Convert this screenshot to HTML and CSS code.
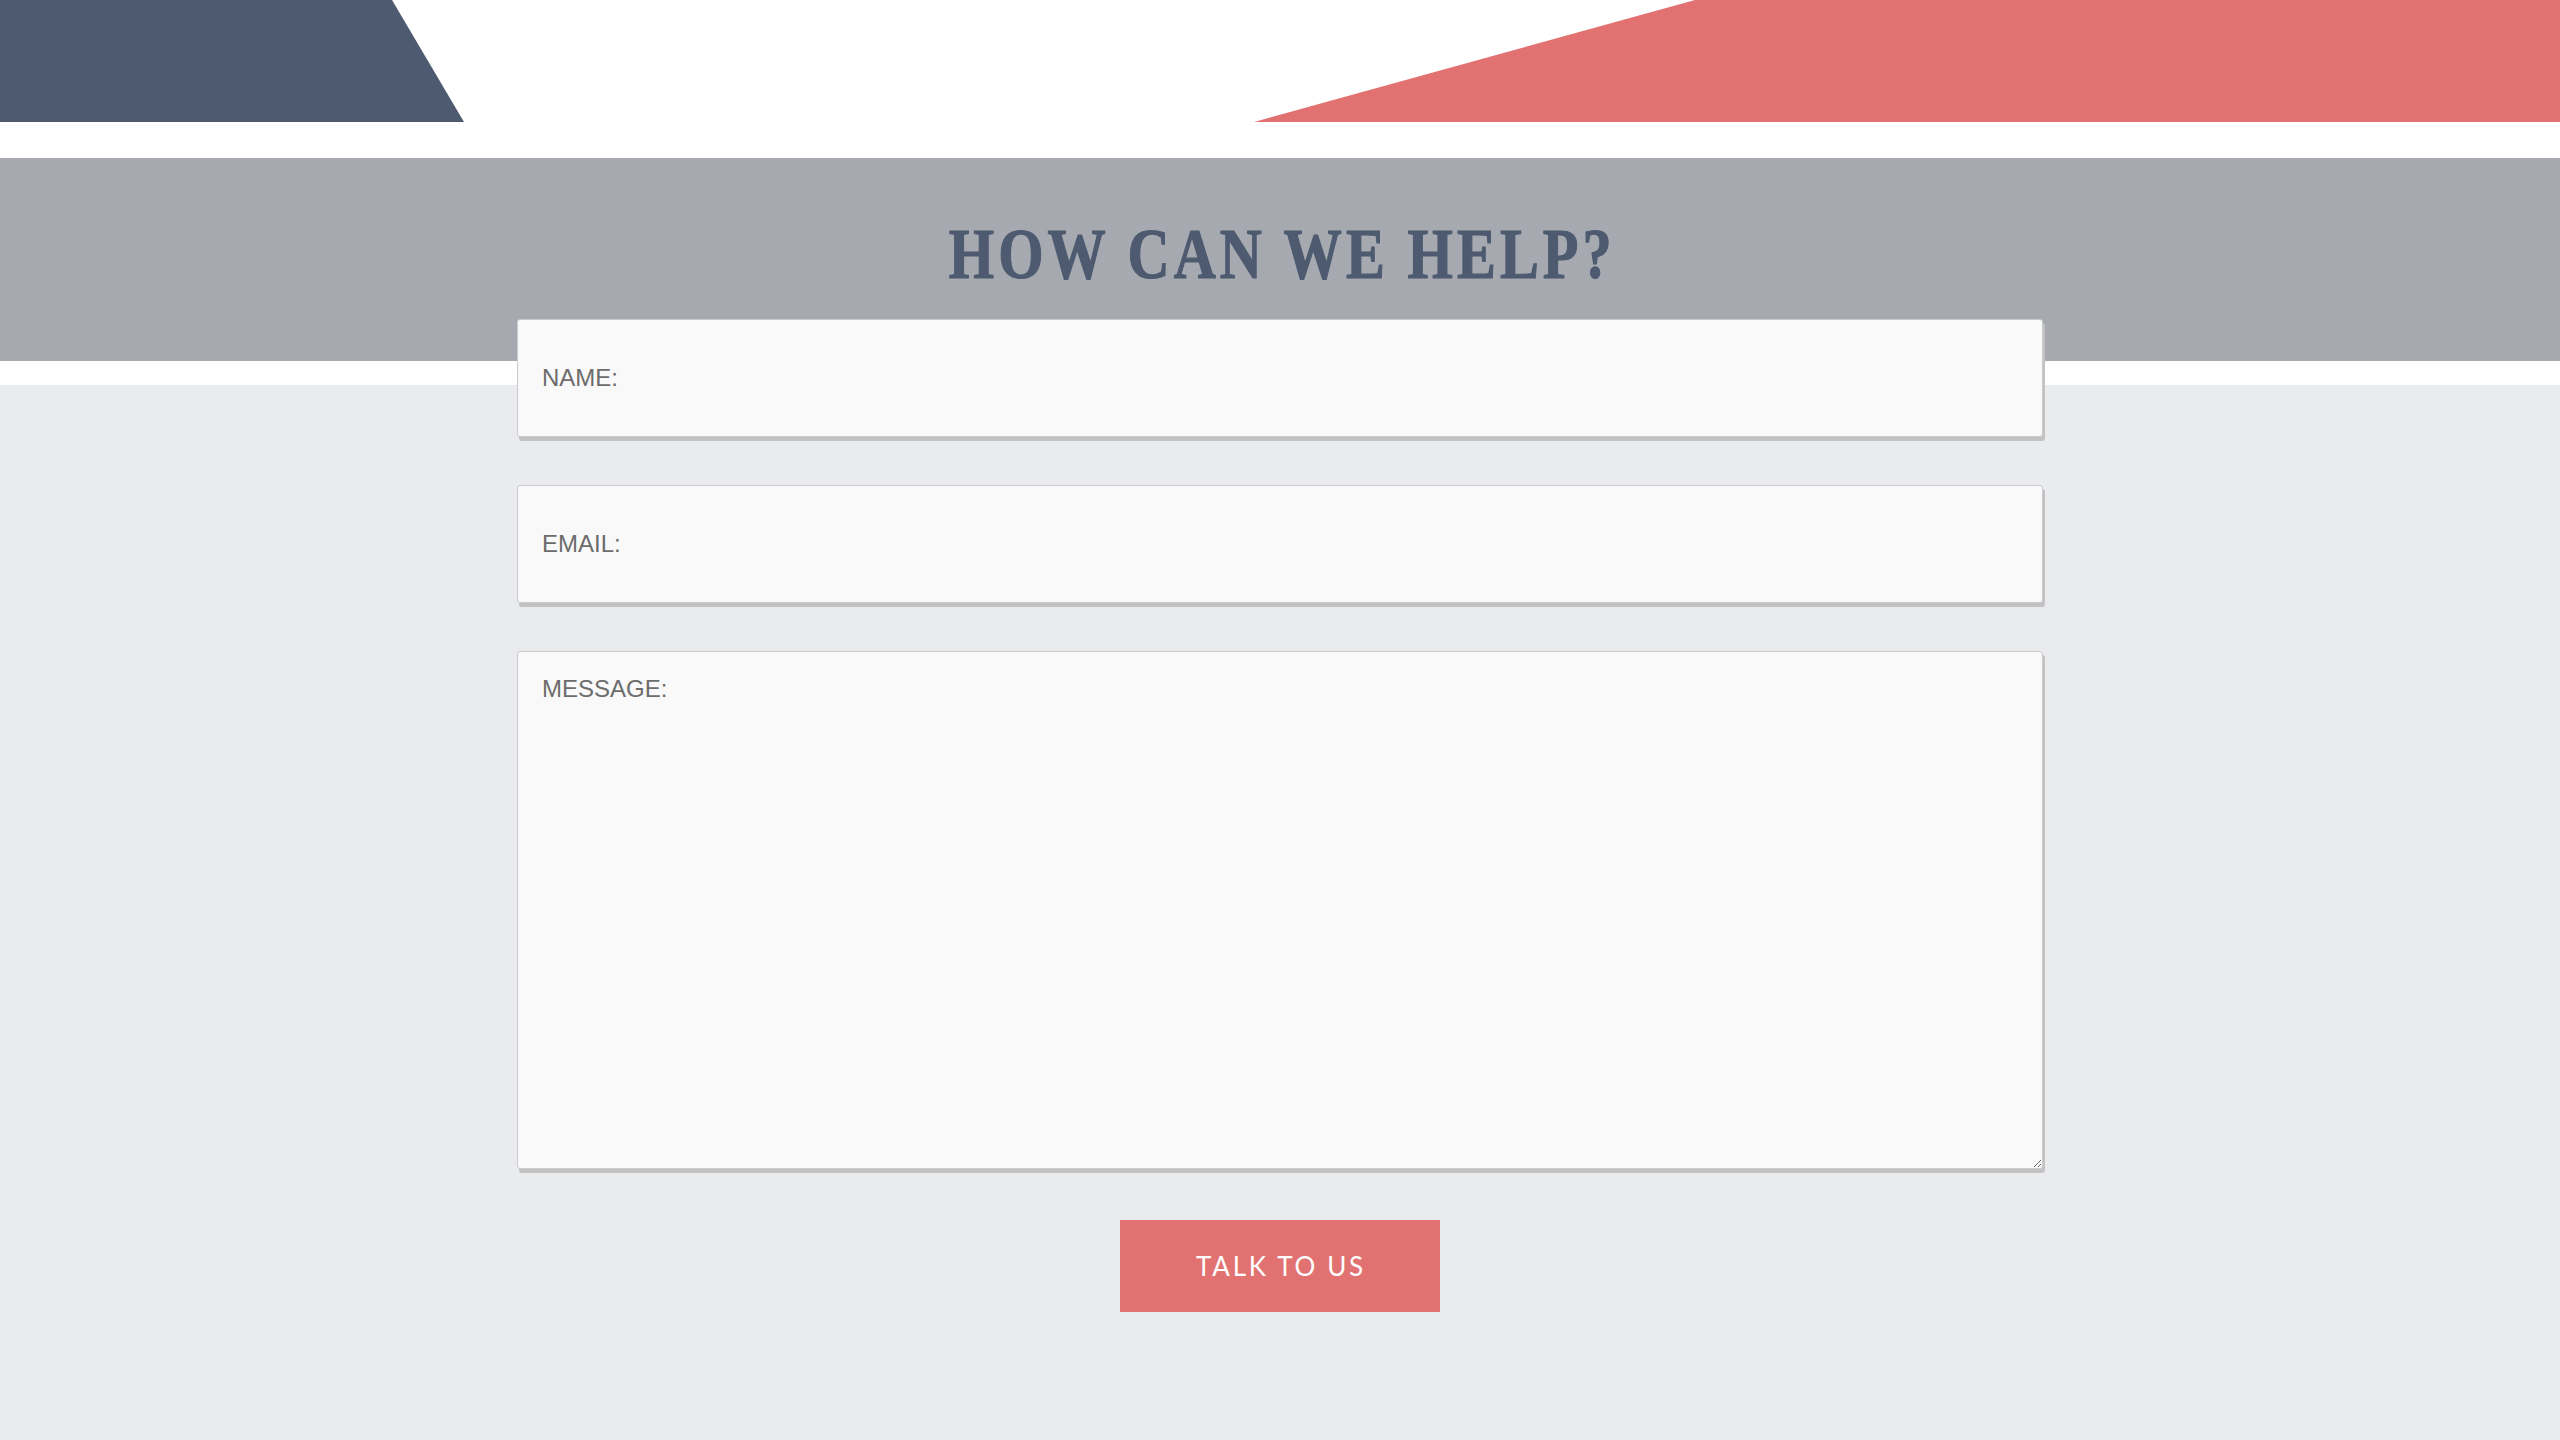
FILE: index.html
```html
<!DOCTYPE html>
<html lang="en">
<head>
<meta charset="utf-8">
<title>How can we help?</title>
<link rel="stylesheet" href="styles.css">
</head>
<body>
<header class="top">
  <svg class="shapes" viewBox="0 0 2560 122" preserveAspectRatio="none" aria-hidden="true">
    <polygon class="shape-dark" points="0,0 392,0 464,122 0,122"/>
    <polygon class="shape-red" points="1695,0 2560,0 2560,122 1254,122"/>
  </svg>
</header>
<main class="contact">
  <h1 class="title"><span class="title-text">HOW CAN WE HELP?</span></h1>
  <form class="form" onsubmit="return false">
    <input class="field" type="text" placeholder="NAME:">
    <input class="field" type="email" placeholder="EMAIL:">
    <textarea class="field field-message" placeholder="MESSAGE:"></textarea>
    <div class="actions">
      <button class="submit" type="submit">TALK TO US</button>
    </div>
  </form>
</main>
</body>
</html>
```

FILE: styles.css
```css
html, body {
  margin: 0;
  padding: 0;
}

body {
  background: #eaebef;
  font-family: "Liberation Sans", Arial, sans-serif;
}

.top {
  height: 158px;
  background: #ffffff;
}

.shapes {
  display: block;
  width: 100%;
  height: 122px;
}

.shape-dark {
  fill: #4d5a70;
}

.shape-red {
  fill: #e27271;
}

.contact {
  min-height: 1282px;
  box-sizing: border-box;
  padding-top: 60px;
  background: linear-gradient(
    to bottom,
    #a6a9b0 0,
    #a6a9b0 203px,
    #ffffff 203px,
    #ffffff 227px,
    #eaebef 227px
  );
}

.title {
  margin: 0;
  text-align: center;
  font-family: "Liberation Serif", "Times New Roman", serif;
  font-weight: 700;
  font-size: 72px;
  line-height: 72px;
  color: #4d5a70;
}

.title-text {
  display: inline-block;
  letter-spacing: 5px;
  padding-left: 5px;
  -webkit-text-stroke: 1.2px #4d5a70;
  transform: scaleX(0.81);
  transform-origin: center;
}

.form {
  width: 1526px;
  margin: 29px auto 0;
  display: flex;
  flex-direction: column;
}

.field {
  box-sizing: border-box;
  width: 100%;
  height: 118px;
  margin: 0 0 48px;
  padding: 0 24px;
  border: 1px solid #cbcbcb;
  border-radius: 3px;
  background: #f9f9f9;
  box-shadow: 2px 4px 0 #c2c2c2;
  font-family: "Liberation Sans", Arial, sans-serif;
  font-size: 24px;
  color: #555555;
  outline: none;
}

.field::placeholder {
  color: #6c6c6c;
  opacity: 1;
}

.field-message {
  height: 518px;
  margin-bottom: 51px;
  padding: 23px 24px;
  resize: vertical;
  display: block;
}

.actions {
  display: flex;
  justify-content: center;
}

.submit {
  width: 320px;
  height: 92px;
  border: none;
  border-radius: 0;
  background: #e27271;
  color: #ffffff;
  font-family: Lato, "Open Sans", sans-serif;
  font-size: 26px;
  font-weight: 400;
  letter-spacing: 2.7px;
  padding: 0 0 0 2px;
  cursor: pointer;
}
```
